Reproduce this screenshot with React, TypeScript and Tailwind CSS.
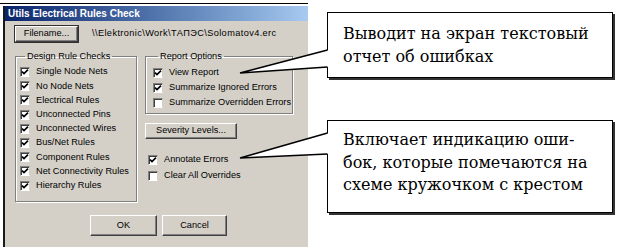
import React from "react";

const Check = ({ checked }: { checked?: boolean }) => (
  <span className="w-[10px] h-[10px] bg-white border border-t-[#808080] border-l-[#808080] border-b-white border-r-[#d4d0c8] shadow-[inset_1px_1px_0_#404040] flex items-center justify-center shrink-0">
    {checked && (
      <svg width="8" height="8" viewBox="0 0 8 8">
        <path d="M1 3.6 L3 5.6 L7 1.6" stroke="#000" strokeWidth="1.7" fill="none" />
      </svg>
    )}
  </span>
);

const Row = ({ label, checked, h = "h-[14.2px]" }: { label: string; checked?: boolean; h?: string }) => (
  <div className={"flex items-center gap-[6px] " + h}>
    <Check checked={checked} />
    <span className="leading-none whitespace-nowrap">{label}</span>
  </div>
);

const Btn = ({ children, className }: { children: React.ReactNode; className: string }) => (
  <div
    className={
      "flex items-center justify-center bg-[#d4d0c8] border border-t-white border-l-white border-r-[#404040] border-b-[#404040] shadow-[inset_-1px_-1px_0_#808080] " +
      className
    }
  >
    {children}
  </div>
);

export default function App() {
  return (
    <div className="relative w-[620px] h-[248px] bg-white overflow-hidden flex">
      {/* dialog */}
      <div className="w-[308px] h-[244px] mt-[3px] border-t border-black flex flex-col">
        <div className="flex flex-1 mt-[2px]">
          <div className="w-[2px] bg-[#1a1a1a] ml-[3px]" />
          <div className="flex-1 flex flex-col">
            <div className="h-[15px] bg-gradient-to-r from-[#0a246a] to-[#a6caf0] flex items-center pl-[3px]">
              <span className="text-white font-bold text-[10px] font-[Liberation_Sans] leading-none">
                Utils Electrical Rules Check
              </span>
            </div>
            <div className="flex-1 bg-[#d4d0c8] pl-[10px] pt-[5px] font-[Liberation_Sans] text-[9.2px] text-black">
              <div className="flex items-center h-[16px]">
                <Btn className="w-[63px] h-[16px] outline outline-1 outline-[#303030]">Filename...</Btn>
                <span className="ml-[14px] tracking-[0.4px]">\\Elektronic\Work\ТАПЭС\Solomatov4.erc</span>
              </div>
              <div className="flex mt-[8px] gap-[8px]">
                <fieldset className="min-w-0 w-[122px] h-[152px] border border-[#808080] shadow-[1px_1px_0_#fff,inset_1px_1px_0_#fff] pl-[4px] pt-[3px]">
                  <legend className="ml-[5px] px-[2px] leading-[12px]">Design Rule Checks</legend>
                  <Row label="Single Node Nets" checked />
                  <Row label="No Node Nets" checked />
                  <Row label="Electrical Rules" checked />
                  <Row label="Unconnected Pins" checked />
                  <Row label="Unconnected Wires" checked />
                  <Row label="Bus/Net Rules" checked />
                  <Row label="Component Rules" checked />
                  <Row label="Net Connectivity Rules" checked />
                  <Row label="Hierarchy Rules" checked />
                </fieldset>
                <div className="flex flex-col">
                  <fieldset className="min-w-0 w-[148px] h-[64px] border border-[#808080] shadow-[1px_1px_0_#fff,inset_1px_1px_0_#fff] pl-[7px] pt-[3px]">
                    <legend className="ml-[5px] px-[2px] leading-[12px]">Report Options</legend>
                    <Row label="View Report" checked h="h-[15px]" />
                    <Row label="Summarize Ignored Errors" checked h="h-[15px]" />
                    <Row label="Summarize Overridden Errors" h="h-[15px]" />
                  </fieldset>
                  <Btn className="w-[92px] h-[16px] mt-[9px]">Severity Levels...</Btn>
                  <div className="mt-[13px] ml-[3px] flex flex-col">
                    <Row label="Annotate Errors" checked h="h-[16px]" />
                    <Row label="Clear All Overrides" h="h-[16px]" />
                  </div>
                </div>
              </div>
              <div className="flex gap-[5px] ml-[75px] mt-[13px]">
                <Btn className="w-[67px] h-[21px]">OK</Btn>
                <Btn className="w-[65px] h-[21px]">Cancel</Btn>
              </div>
            </div>
          </div>
        </div>
      </div>

      {/* callouts */}
      <div className="ml-[19px] flex flex-col font-[DejaVu_Serif] text-[16px] text-black">
        <div className="mt-[12px] w-[286px] h-[66px] border border-black shadow-[2px_2px_0_#333] pl-[15px] pt-[9px] leading-[23px]">
          <div>Выводит на экран текстовый</div>
          <div>отчет об ошибках</div>
        </div>
        <div className="mt-[42px] w-[286px] h-[93px] border border-black shadow-[2px_2px_0_#333] pl-[15px] pt-[8px] leading-[22.5px]">
          <div>Включает индикацию оши-</div>
          <div>бок, которые помечаются на</div>
          <div>схеме кружочком с крестом</div>
        </div>
      </div>

      {/* callout pointers */}
      <svg className="absolute inset-0 pointer-events-none" width="620" height="248" viewBox="0 0 620 248">
        <polygon points="328.5,50 240,73 328.5,67" fill="#fff" />
        <polyline points="327.5,50 240,73 327.5,67" fill="none" stroke="#000" strokeWidth="1.4" />
        <polygon points="328.5,133 240,158 328.5,154" fill="#fff" />
        <polyline points="327.5,133 240,158 327.5,154" fill="none" stroke="#000" strokeWidth="1.4" />
      </svg>
    </div>
  );
}
